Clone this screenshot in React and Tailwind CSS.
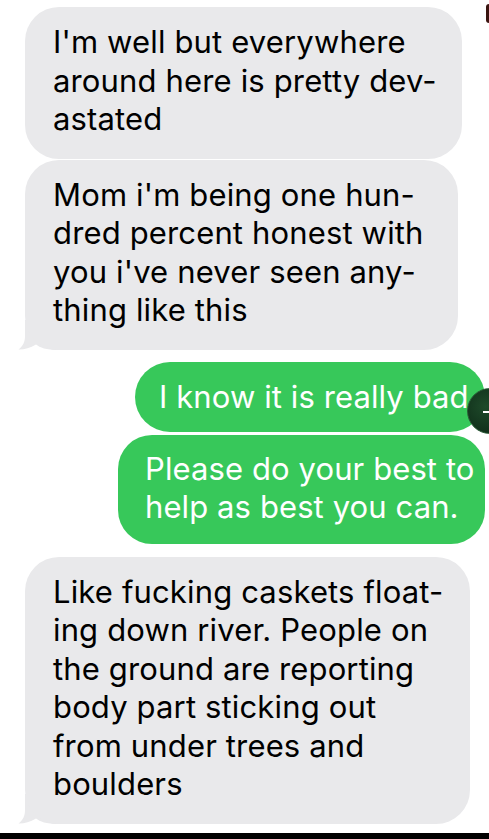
import React from "react";

function Tail({ color, className }) {
  return (
    <svg
      className={className}
      width="40"
      height="30"
      viewBox="0 0 40 30"
      fill={color}
    >
      <path d="M7 0 L7 16 C7 22 5 26 0.5 29.6 C6 29.8 12 28 18 24.5 C22 27.5 28 30 40 30 L40 0 Z" />
    </svg>
  );
}

function Gray({ lines, tail, className }) {
  return (
    <div className={"relative ml-[25px] " + className}>
      <div className="relative z-10 rounded-[34px] bg-[#e9e9eb] pl-[28px] pr-4 pt-[16px] pb-[20px] text-[31px] leading-[38.5px] tracking-[0.15px] text-black">
        {lines.map((l, i) => (
          <div key={i} className="whitespace-nowrap">{l}</div>
        ))}
      </div>
      {tail && <Tail color="#e9e9eb" className="absolute bottom-0 left-[-7px] z-0" />}
    </div>
  );
}

export default function App() {
  return (
    <div
      className="relative flex h-[839px] w-[489px] flex-col overflow-hidden bg-white"
      style={{ fontFamily: "Inter, 'Liberation Sans', sans-serif" }}
    >
      <div className="absolute right-0 top-[4px] h-[19px] w-[3px] rounded-l-sm bg-[#3a1410]" />

      <div className="flex flex-col pt-[7px]">
        <Gray
          className="w-[437px]"
          lines={["I'm well but everywhere", "around here is pretty dev-", "astated"]}
        />
        <Gray
          className="mt-[1px] w-[433px]"
          tail
          lines={[
            "Mom i'm being one hun-",
            "dred percent honest with",
            "you i've never seen any-",
            "thing like this",
          ]}
        />

        <div className="mt-[12px] flex flex-col items-end pr-[4px]">
          <div className="flex h-[70px] w-[350px] items-center rounded-[35px] bg-[#37c85a] pl-[24px] pr-[20px] text-[31px] leading-[38px] tracking-[0.1px] text-white">
            <span className="whitespace-nowrap">I know it is really bad</span>
          </div>
          <div className="mt-[3px] w-[367px] rounded-[34px] bg-[#37c85a] pl-[27px] pr-4 pt-[15px] pb-[17px] text-[31px] leading-[38.5px] tracking-[0.1px] text-white">
            <div className="whitespace-nowrap">Please do your best to</div>
            <div className="whitespace-nowrap">help as best you can.</div>
          </div>
        </div>

        <Gray
          className="mt-[13px] w-[445px]"
          tail
          lines={[
            "Like fucking caskets float-",
            "ing down river. People on",
            "the ground are reporting",
            "body part sticking out",
            "from under trees and",
            "boulders",
          ]}
        />
      </div>

      <div className="mt-auto h-[6px] w-full bg-black" />

      <div className="absolute left-[467px] top-[388px] h-[46px] w-[46px] rounded-full border border-[#2a5a36] bg-[radial-gradient(circle_at_40%_40%,#1e4a2a,#0b2414)]">
        <div className="absolute left-[15px] top-[22px] h-[2px] w-[10px] bg-white" />
      </div>
    </div>
  );
}
